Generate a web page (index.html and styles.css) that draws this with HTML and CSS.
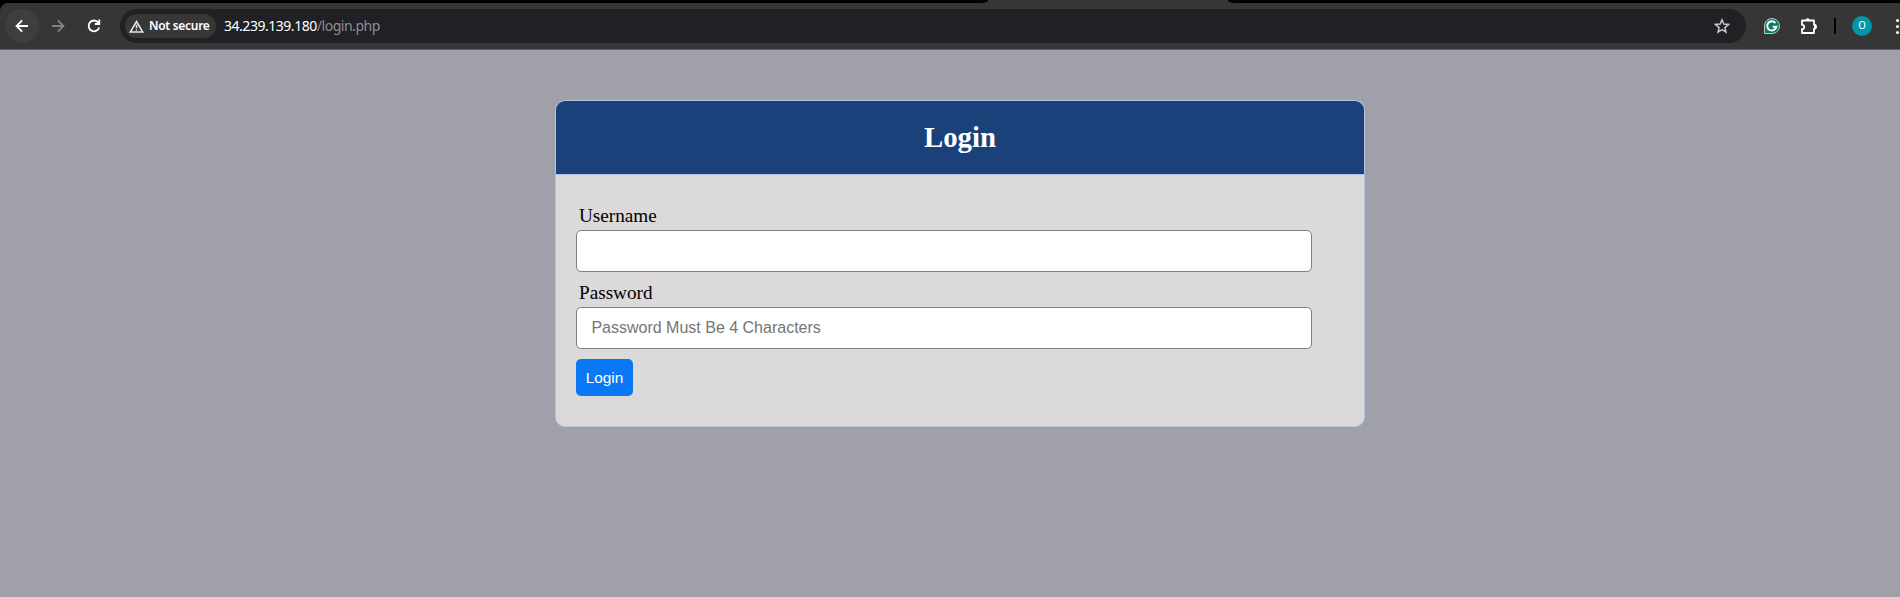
FILE: index.html
```html
<!DOCTYPE html>
<html lang="en">
<head>
<meta charset="utf-8">
<title>Login</title>
<link rel="stylesheet" href="styles.css">
</head>
<body>
<div class="tabstrip"><div class="tab-gap tab-gap-left"></div><div class="tab-gap tab-gap-right"></div></div>
<div class="toolbar-frame">
<div class="toolbar">
  <div class="nav nav-back"><svg width="14" height="14" viewBox="0 0 14 14" fill="none" stroke="#fff" stroke-width="1.8"><path d="M13 7H2M7.2 1.3L1.5 7l5.7 5.7"/></svg></div>
  <div class="nav"><svg width="14" height="14" viewBox="0 0 14 14" fill="none" stroke="#828282" stroke-width="1.8"><path d="M1 7h11M6.8 1.3L12.5 7l-5.7 5.7"/></svg></div>
  <div class="nav"><svg width="14" height="14" viewBox="0 0 14 14" fill="none" stroke="#fff" stroke-width="1.8"><path d="M11.3 3.600A5.400 5.400 0 1 0 12.200 8.500M12.300 0.500V5H7.800"/></svg></div>
  <div class="omnibox">
    <div class="chip"><svg width="15" height="13" viewBox="0 0 15 13" fill="none" stroke="#e8e8e8" stroke-width="1.5"><path d="M7.5 1.500L13.700 12H1.300zM7.500 4.800v3.400M7.500 9.200v1.400"/></svg><span class="chip-text">Not secure</span></div>
    <div class="url"><span class="host">34.239.139.180</span><span class="path">/login.php</span></div>
    <svg class="star" width="16" height="16" viewBox="0 0 16 16" fill="none" stroke="#c7c7c7" stroke-width="1.5"><path d="M8 1.800l1.800 4.300 4.700.4-3.600 3.100 1.100 4.600L8 11.700l-4 2.500 1.100-4.600L1.500 6.500l4.700-.4z"/></svg>
  </div>
  <svg class="grammar" width="16" height="16" viewBox="0 0 16 16"><path d="M.5 15.500V8A7.500 7.500 0 1 1 8 15.500z" fill="#077a63" stroke="#b9c9c5"/><path d="M11.400 5A4.600 4.600 0 1 0 12.400 8.700H8.700" fill="none" stroke="#fff" stroke-width="2"/></svg>
  <svg class="puzzle" width="17" height="17" viewBox="0 0 17 17"><path d="M2 2.500h12v4.200a2 2 0 0 1 0 4V15H2v-3.800a2.200 2.200 0 0 0 0-4.400z" fill="none" stroke="#fff" stroke-width="1.8" stroke-linejoin="round"/><path d="M5.500 2.500a2.100 2.300 0 0 1 4.200 0zM14 6.500a2.600 2.100 0 0 1 0 4.200z" fill="#fff"/></svg>
  <div class="divider"></div>
  <div class="avatar">O</div>
  <div class="menu"><i></i><i></i><i></i></div>
</div>
</div>
<main class="page">
  <div class="header"><h2>Login</h2></div>
  <form class="form">
    <div class="group"><label for="user">Username</label><input id="user" type="text"></div>
    <div class="group"><label for="pass">Password</label><input id="pass" type="password" placeholder="Password Must Be 4 Characters"></div>
    <button class="btn" type="button">Login</button>
  </form>
</main>
</body>
</html>
```
FILE: styles.css
```css
* { margin: 0; padding: 0; box-sizing: border-box; }
body {
  height: 597px;
  overflow: hidden;
  background: #a0a0ab;
  font-family: "Liberation Serif", "Times New Roman", serif;
  font-size: 19.2px;
}
svg { display: block; flex: none; }
.tabstrip { height: 3px; background: #373737; display: flex; justify-content: space-between; }
.tab-gap { background: #000; height: 3px; }
.tab-gap-left { width: 988px; border-bottom-right-radius: 6px 3px; }
.tab-gap-right { width: 672px; border-bottom-left-radius: 6px 3px; }
.toolbar-frame { background: #000; }
.toolbar {
  height: 47px;
  padding: 0 0 0 5px;
  background: #363636;
  border-bottom: 1px solid #5c5c5e;
  border-top-left-radius: 8px;
  display: flex;
  align-items: center;
  overflow: hidden;
  font-family: "Noto Sans", "Open Sans", sans-serif;
}
.nav { width: 34px; height: 34px; margin-right: 2px; border-radius: 50%; display: flex; align-items: center; justify-content: center; flex: none; }
.nav-back { background: #3e3e3e; }
.omnibox {
  width: 1626px;
  height: 34px;
  margin-left: 7px;
  padding: 0 16px 0 5px;
  border-radius: 17px;
  background: #202125;
  display: flex;
  align-items: center;
  flex: none;
}
.chip { width: 91px; height: 24px; padding-left: 4px; border-radius: 12px; background: #373737; display: flex; align-items: center; gap: 5px; }
.chip-text { padding-bottom: 1px; color: #fff; font-size: 12px; font-weight: 600; letter-spacing: -0.3px; white-space: nowrap; }
.url { margin-left: 8px; padding-bottom: 1px; font-size: 14px; letter-spacing: -0.47px; white-space: nowrap; }
.host { color: #fff; }
.path { color: #8d8e90; }
.star { margin-left: auto; }
.grammar { margin-left: 18px; }
.puzzle { margin-left: 20px; }
.divider { width: 2px; height: 16px; margin-left: 17px; background: #000; flex: none; }
.avatar { width: 20px; height: 20px; margin-left: 16px; border-radius: 50%; background: #0097a7; color: #fff; font: 11px/20px Roboto, sans-serif; text-align: center; flex: none; }
.menu { width: 3px; margin-left: 24px; display: grid; gap: 3px; flex: none; }
.menu i { width: 3px; height: 3px; border-radius: 50%; background: #fff; }
.page { width: 810px; margin: 50px 0 0 555px; }
.header { height: 74px; padding: 20px; border: 1px solid #b0c4de; border-bottom: 0; border-radius: 10px 10px 0 0; background: #1b417a; color: #fff; text-align: center; }
.header h2 { font-size: 28.8px; line-height: 33px; }
.form { height: 253px; padding: 30px 20px 20px; border: 1px solid #b0c4de; border-radius: 0 0 10px 10px; background: #dbd9da; }
.group { height: 77px; }
.group label { display: block; margin-left: 3px; height: 25px; line-height: 22px; }
.group input { display: block; width: 736px; height: 42px; padding: 5px 14.4px; border: 1px solid #808080; border-radius: 5px; background: #fff; font: 16px "Liberation Sans", Arial, sans-serif; }
.group input::placeholder { color: #757575; }
.btn { display: block; width: 57px; height: 37px; border: 0; border-radius: 5px; background: #0a78f5; color: #fff; font: 15.4px "Liberation Sans", Arial, sans-serif; }
```
